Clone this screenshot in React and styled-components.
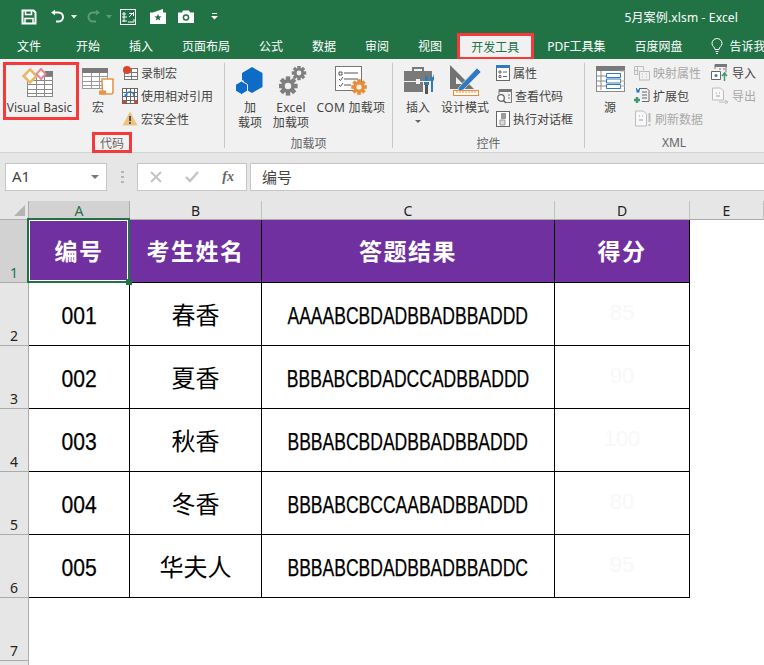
import { Fragment } from "react";
import styled, { createGlobalStyle } from "styled-components";

const GREEN = "#217346";
const RED = "#f43a3a";
const UI_FONT = `"Noto Sans", "Noto Sans CJK SC", sans-serif`;
const CELL_FONT = `"Liberation Sans", "Noto Sans CJK SC", sans-serif`;

const GlobalStyle = createGlobalStyle`
  html, body { margin: 0; padding: 0; background: #fff; }
  body { font-family: ${UI_FONT}; }
  * { box-sizing: border-box; }
`;

const Page = styled.div`
  width: 764px;
  height: 665px;
  overflow: hidden;
  display: flex;
  flex-direction: column;
`;

/* title bar */
const TitleBar = styled.div`
  height: 33px;
  flex: none;
  background: ${GREEN};
  display: flex;
  align-items: center;
  justify-content: space-between;
  padding: 0 26px 0 21px;
  color: #fff;
`;
const QuickAccess = styled.div`
  display: flex;
  align-items: center;
`;
const QuickItem = styled.span`
  display: flex;
  margin-left: ${(p) => p.$gap || 0}px;
`;
const DocName = styled.div`
  font-size: 12px;
  letter-spacing: 0.15px;
`;

/* tabs */
const TabBar = styled.div`
  height: 26px;
  flex: none;
  background: ${GREEN};
  display: flex;
  padding-left: 2.5px;
  overflow: hidden;
`;
const Tab = styled.div`
  height: 26px;
  flex: none;
  padding: 0 14.5px;
  margin-right: ${(p) => (p.$first ? "6px" : p.$active ? "-1px" : "0")};
  display: flex;
  align-items: center;
  gap: 6px;
  font-size: 12px;
  white-space: nowrap;
  color: ${(p) => (p.$active ? GREEN : "#fff")};
  background: ${(p) => (p.$active ? "#f1f1f1" : "transparent")};
  ${(p) => p.$active && `border: 3px solid ${RED}; border-bottom-width: 2px; padding: 0 11.5px;`}
`;

/* ribbon */
const Ribbon = styled.div`
  height: 94px;
  flex: none;
  background: #f1f1f1;
  border-bottom: 1px solid #d4d4d4;
  display: flex;
`;
const Group = styled.div`
  width: ${(p) => p.$width}px;
  flex: none;
  display: flex;
  flex-direction: column;
`;
const GroupBody = styled.div`
  height: 73px;
  flex: none;
  display: flex;
  padding-left: ${(p) => p.$left || 0}px;
  padding-top: 3px;
`;
const GroupFooter = styled.div`
  height: 21px;
  flex: none;
  display: flex;
  justify-content: center;
`;
const GroupLabel = styled.div`
  height: 21px;
  padding: 0 5px;
  display: flex;
  align-items: center;
  font-size: 12px;
  color: #666;
  ${(p) => p.$marked && `border: 3px solid ${RED}; padding: 0 5px;`}
`;
const Divider = styled.div`
  width: 1px;
  flex: none;
  margin: 4px 0;
  background: #c8c8c8;
`;
const LargeButton = styled.div`
  width: ${(p) => p.$width}px;
  flex: none;
  display: flex;
  flex-direction: column;
  align-items: center;
  font-size: 12px;
  line-height: 15px;
  color: #444;
  text-align: center;
  white-space: nowrap;
  letter-spacing: ${(p) => p.$spacing || 0}px;
  ${(p) => p.$marked && `border: 3px solid ${RED}; height: 58px; padding-right: 3px;`}
`;
const IconSlot = styled.div`
  height: ${(p) => p.$height || 38}px;
  flex: none;
  display: flex;
  align-items: center;
  justify-content: center;
`;
const Caret = styled.div`
  width: 0;
  height: 0;
  margin-top: 5px;
  border-left: 3px solid transparent;
  border-right: 3px solid transparent;
  border-top: 3px solid #666;
`;
const SmallList = styled.div`
  display: flex;
  flex-direction: column;
  flex: none;
  margin-left: ${(p) => p.$left || 0}px;
  margin-top: -1px;
`;
const SmallButton = styled.div`
  height: 23px;
  display: flex;
  align-items: center;
  gap: 3px;
  font-size: 12px;
  white-space: nowrap;
  color: ${(p) => (p.$off ? "#a8a8a8" : "#444")};
`;

/* formula bar */
const FormulaBar = styled.div`
  height: 48px;
  flex: none;
  background: #e6e6e6;
  display: flex;
  align-items: center;
  padding-left: 5px;
`;
const NameBox = styled.div`
  width: 102px;
  height: 28px;
  background: #fff;
  border: 1px solid #c6c6c6;
  display: flex;
  align-items: center;
  justify-content: space-between;
  padding: 0 7px 2px 6px;
  font-size: 15px;
  color: #444;
`;
const NameArrow = styled.div`
  width: 0;
  height: 0;
  margin-top: 2px;
  border-left: 4px solid transparent;
  border-right: 4px solid transparent;
  border-top: 4px solid #777;
`;
const Grip = styled.div`
  width: 3px;
  height: 12px;
  margin: 0 13px 0 14px;
  background: repeating-linear-gradient(to bottom, #b4b4b4 0 2px, transparent 2px 5px);
`;
const FormulaButtons = styled.div`
  width: 110px;
  height: 28px;
  background: #fff;
  border: 1px solid #c6c6c6;
  display: flex;
  align-items: center;
  justify-content: space-between;
  padding: 0 12px;
`;
const FxText = styled.span`
  font-family: "Liberation Serif", serif;
  font-style: italic;
  font-weight: 700;
  font-size: 14px;
  color: #666;
`;
const FormulaInput = styled.div`
  flex: 1;
  height: 28px;
  margin-left: 3px;
  background: #fff;
  border: 1px solid #c6c6c6;
  border-right: 0;
  display: flex;
  align-items: center;
  padding: 0 0 2px 11px;
  font-size: 15px;
  color: #444;
`;

/* sheet */
const Sheet = styled.div`
  flex: 1;
  display: grid;
  grid-template-columns: 29px 101px 132px 293px 135px 1fr;
  grid-template-rows: 19px repeat(8, 63px);
  background: #fff;
  overflow: hidden;
`;
const Corner = styled.div`
  background: #e6e6e6;
  border-right: 1px solid #ababab;
  border-bottom: 1px solid #ababab;
  display: flex;
  align-items: flex-end;
  justify-content: flex-end;
  padding: 0 3px 3px 0;
`;
const ColHead = styled.div`
  background: ${(p) => (p.$selected ? "#d2d2d2" : "#e6e6e6")};
  color: ${(p) => (p.$selected ? GREEN : "#222")};
  border-bottom: 1px solid #ababab;
  border-right: 1px solid ${(p) => (p.$selected ? "#ababab" : "#c0c0c0")};
  font-size: 14px;
  line-height: 18px;
  padding-top: 1px;
  text-align: center;
`;
const RowHead = styled.div`
  background: ${(p) => (p.$selected ? "#d2d2d2" : "#e6e6e6")};
  color: ${(p) => (p.$selected ? GREEN : "#222")};
  border-right: 1px solid #ababab;
  border-bottom: 1px solid #ababab;
  font-size: 14px;
  display: flex;
  align-items: flex-end;
  justify-content: center;
`;
const Cell = styled.div`
  border-right: 1px solid #000;
  border-bottom: 1px solid #000;
  display: flex;
  align-items: center;
  justify-content: center;
  padding-bottom: 2px;
  font-family: ${CELL_FONT};
  font-size: 24px;
  color: #000;
  white-space: nowrap;
`;
/* the sheet's latin font is much narrower than anything installed */
const Narrow = styled.span`
  display: inline-block;
  margin-top: 5px;
  -webkit-text-stroke: 0.25px #000;
  transform: scaleX(${(p) => p.$scale});
`;
const HeadCell = styled(Cell)`
  position: relative;
  background: #7030a0;
  color: #fff;
  font-weight: 700;
  font-family: "Noto Sans CJK SC", sans-serif;
  font-size: 23px;
  letter-spacing: 1.5px;
`;
const Selection = styled.div`
  position: absolute;
  z-index: 1;
  left: -2px;
  top: -2px;
  right: -1px;
  bottom: -1px;
  border: 2px solid ${GREEN};
  outline: 1px solid #fff;
  outline-offset: -3px;
`;
const FillHandle = styled.div`
  position: absolute;
  z-index: 2;
  right: -3px;
  bottom: -3px;
  width: 6px;
  height: 6px;
  background: ${GREEN};
`;
const Empty = styled.div``;
const Score = styled(Cell)`
  color: #f6f8f9;
  font-size: 22px;
`;

/* quick access icons */
const SaveIcon = () => (
  <svg width="16" height="16" viewBox="0 0 16 16" fill="none" stroke="#fff" strokeWidth="2">
    <path d="M1.5 1.5h11l2 2v11h-13z" />
    <path d="M4.5 1.5v4h6v-4" strokeWidth="1.5" />
    <path d="M4 14.5v-5h8v5" strokeWidth="1.5" />
  </svg>
);
const UndoIcon = ({ off }) => (
  <svg width="17" height="15" viewBox="0 0 17 15" fill="none" stroke={off ? "#5f9a7b" : "#fff"} strokeWidth="2">
    {off ? (
      <>
        <path d="M15 3.5L11 .8v5.5z" fill="#5f9a7b" stroke="none" />
        <path d="M12 3.5H8a4.5 4.5 0 0 0 0 9h3" />
      </>
    ) : (
      <>
        <path d="M1 3.5L5 .8v5.5z" fill="#fff" stroke="none" />
        <path d="M4 3.5h4.5a4.5 4.5 0 0 1 0 9H6" />
      </>
    )}
  </svg>
);
const TinyCaret = ({ off }) => (
  <svg width="6" height="4" viewBox="0 0 6 4">
    <path d="M0 0h6L3 3.5z" fill={off ? "#5f9a7b" : "#fff"} />
  </svg>
);
const FrameIcon = () => (
  <svg width="16" height="16" viewBox="0 0 16 16" fill="none" stroke="#fff">
    <rect x=".5" y=".5" width="15" height="15" />
    <path d="M4 3v10M2 8h5M2 12h5M2 5h4" />
    <path d="M14 3l-5 5M9 4.5h5M13.5 3v4M8 13h6v-3" />
  </svg>
);
const StarFolderIcon = () => (
  <svg width="16" height="15" viewBox="0 0 16 15">
    <path d="M0 3.5h3L13 0v3.5h3V15H0z" fill="#fff" />
    <path d="M8 5l1 2.3 2.5.2-1.9 1.6.6 2.4L8 10.3l-2.2 1.2.6-2.4-1.9-1.6L7 7.3z" fill={GREEN} />
  </svg>
);
const CameraIcon = () => (
  <svg width="16" height="13" viewBox="0 0 16 13">
    <path d="M0 2.5h4L5 .5h6l1 2h4V13H0z" fill="#fff" />
    <circle cx="8" cy="7.5" r="3.3" fill={GREEN} />
    <circle cx="8" cy="7.5" r="1.8" fill="#fff" />
  </svg>
);
const CustomizeIcon = () => (
  <svg width="7" height="7" viewBox="0 0 7 7">
    <path d="M1 .5h5" stroke="#fff" />
    <path d="M0 3h7L3.5 6.5z" fill="#fff" />
  </svg>
);
const BulbIcon = () => (
  <svg width="12" height="16" viewBox="0 0 12 16" fill="none" stroke="#fff">
    <path d="M4 11.5C4 9 1 8.5 1 5.5a5 5 0 0 1 10 0c0 3-3 3.5-3 6z" />
    <path d="M4.5 13.5h3M5 15.5h2" />
  </svg>
);

/* ribbon icons */
const SheetLines = ({ x, y, w, h, cols = 3, rows = 4, color = "#8a8a8a" }) => (
  <g stroke={color} fill="none">
    <rect x={x + 0.5} y={y + 0.5} width={w - 1} height={h - 1} fill="#fff" />
    {Array.from({ length: rows - 1 }, (_, i) => (
      <path key={i} d={`M${x} ${y + 0.5 + Math.round(((i + 1) * h) / rows)}h${w}`} />
    ))}
    {Array.from({ length: cols - 1 }, (_, i) => (
      <path key={i} d={`M${x + 0.5 + Math.round(((i + 1) * w) / cols)} ${y}v${h}`} />
    ))}
  </g>
);
const VisualBasicIcon = () => (
  <svg width="32" height="30" viewBox="0 0 32 30" style={{ marginLeft: -3 }}>
    <SheetLines x={5} y={8} w={26} h={21} cols={3} rows={5} />
    <path d="M23 3h8v5h-8z" fill="#7a7a7a" />
    <path d="M8 1.5l6.5 6.5L8 14.5 1.5 8z" fill="#fff" stroke="#e8b765" strokeWidth="2.5" />
    <path d="M19 1l4.5 5-4.5 5-4.5-5z" fill="#fff" stroke="#e58a9a" strokeWidth="2" />
  </svg>
);
const MacroIcon = () => (
  <svg width="32" height="30" viewBox="0 0 32 30">
    <SheetLines x={0} y={2} w={26} h={21} cols={3} rows={5} color="#9a9a9a" />
    <rect x="0" y="2" width="26" height="5" fill="#7a7a7a" />
    <path d="M20 13h11v13q0 2-2 2H18q3-1 2.5-3z" fill="#fff" stroke="#e8954a" strokeWidth="1.6" />
    <path d="M17 24.5h7v4h-7z" fill="#e8954a" />
  </svg>
);
const RecordIcon = () => (
  <svg width="16" height="16" viewBox="0 0 16 16">
    <SheetLines x={2} y={3} w={14} h={12} cols={2} rows={3} color="#777" />
    <circle cx="5" cy="5" r="4" fill="#d5492a" />
  </svg>
);
const RelativeIcon = () => (
  <svg width="16" height="16" viewBox="0 0 16 16">
    <SheetLines x={0} y={0} w={16} h={16} cols={4} rows={4} color="#666" />
    <path d="M1 12h3v3H1zM12 12h3v3h-3z" fill="#d5492a" />
    <path d="M4 8a4 4 0 0 1 8 0" stroke="#2f7ac0" strokeWidth="1.6" fill="none" />
    <path d="M2 6.5h4L4 10z" fill="#2f7ac0" />
  </svg>
);
const WarningIcon = () => (
  <svg width="16" height="15" viewBox="0 0 16 15">
    <path d="M8 .5L15.5 14.5H.5z" fill="#eec27d" />
    <path d="M7 5h2v5H7zM7 11h2v2H7z" fill="#555" />
  </svg>
);
const HexIcon = () => (
  <svg width="28" height="28" viewBox="0 0 28 28" style={{ marginLeft: -2 }}>
    <path d="M17 0l10.5 6v14L17 26 9 21.5V14l-2-1V6z" fill="#0f6cc6" />
    <path d="M6.5 14l6 3.5v6.500l-6 3.5L.5 24v-6.500z" fill="#0f6cc6" stroke="#f1f1f1" />
  </svg>
);
const Gear = ({ cx, cy, r, color }) => {
  const teeth = Array.from({ length: 4 }, (_, i) => (i * 360) / 8);
  return (
    <g>
      {teeth.map((a) => (
        <rect
          key={a}
          x={cx - r * 0.28}
          y={cy - r * 1.2}
          width={r * 0.56}
          height={r * 2.4}
          fill={color}
          transform={`rotate(${a} ${cx} ${cy})`}
        />
      ))}
      <circle cx={cx} cy={cy} r={r * 0.85} fill={color} />
      <circle cx={cx} cy={cy} r={r * 0.4} fill="#f1f1f1" />
    </g>
  );
};
const GearsIcon = () => (
  <svg width="28" height="30" viewBox="0 0 28 30" style={{ marginLeft: 3 }}>
    <Gear cx={20} cy={7} r={6} color="#7f7f7f" />
    <Gear cx={9} cy={20} r={8} color="#7f7f7f" />
  </svg>
);
const ComIcon = () => (
  <svg width="32" height="30" viewBox="0 0 32 30" fill="none">
    <rect x=".5" y=".5" width="26" height="24" fill="#fff" stroke="#777" />
    <path d="M4 6h3v3H4z" stroke="#555" />
    <path d="M9 7h14M9 13h14M9 19h7" stroke="#555" />
    <path d="M4 13l1.5 1.5L8 11M4 19l1.5 1.5L8 17" stroke="#555" />
    <Gear cx={24} cy={21} r={6.5} color="#ea8b35" />
  </svg>
);
const ToolboxIcon = () => (
  <svg width="30" height="28" viewBox="0 0 30 28" style={{ marginLeft: 2 }}>
    <path d="M9 4V1h10v3" fill="none" stroke="#7a7a7a" strokeWidth="2" />
    <path d="M0 4h28v10H0zM0 15h19v10H0z" fill="#7a7a7a" />
    <path d="M12 12h4v5h-4z" fill="#f1f1f1" />
    <path d="M21 9h3v5h-3zM20 15h5v3h-5z" fill="#2f7ac0" />
    <path d="M21 18h3v9h-3z" fill="#555" />
    <path d="M26 7v5a2 2 0 0 0 1 2v11h2V14a2 2 0 0 0 1-2V7l-1 3h-2z" fill="#2f7ac0" />
  </svg>
);
const DesignIcon = () => (
  <svg width="32" height="32" viewBox="0 0 32 32" style={{ marginLeft: 1 }}>
    <path d="M0 0l24 24H0zM6 12v7h7z" fill="#737373" fillRule="evenodd" />
    <path d="M9 22L27 3l4 4L13 25l-5 1z" fill="#2f7ac0" stroke="#f1f1f1" strokeWidth=".6" />
    <rect x="3.5" y="25.5" width="25" height="5" fill="#fff" stroke="#ea8b35" />
    <path d="M7 26v2M10 26v2M13 26v2M16 26v2M19 26v2M22 26v2M25 26v2" stroke="#ea8b35" />
  </svg>
);
const PropsIcon = () => (
  <svg width="14" height="16" viewBox="0 0 14 16" fill="none">
    <rect x=".5" y=".5" width="13" height="15" fill="#fff" stroke="#666" />
    <rect x="0" y="0" width="14" height="3" fill="#2f7ac0" />
    <path d="M3 6h2v2H3zM3 10.5h2v2H3zM7 7h4M7 11.5h4" stroke="#666" />
  </svg>
);
const ViewCodeIcon = () => (
  <svg width="16" height="16" viewBox="0 0 16 16" fill="none">
    <path d="M3 6V1.5h12.5v13H9" stroke="#777" />
    <path d="M3 1h13v3H3z" fill="#777" />
    <path d="M12 7h2M12 10h2" stroke="#777" />
    <circle cx="5" cy="10" r="3.3" fill="#fff" stroke="#666" strokeWidth="1.3" />
    <path d="M7.5 12.5L10 15" stroke="#666" strokeWidth="1.6" />
  </svg>
);
const DialogIcon = () => (
  <svg width="14" height="16" viewBox="0 0 14 16">
    <rect x=".5" y=".5" width="13" height="15" fill="#fff" stroke="#666" />
    <path d="M5 2h5v6H5z" fill="#999" />
    <path d="M4 9h5v5H4z" fill="#ddd" stroke="#999" />
  </svg>
);
const SourceIcon = () => (
  <svg width="30" height="30" viewBox="0 0 30 30" fill="none" style={{ marginLeft: 2 }}>
    <rect x=".5" y=".5" width="28" height="25" fill="#fff" stroke="#8a8a8a" />
    <rect x="0" y="0" width="29" height="5" fill="#7a7a7a" />
    <path d="M5 5v19M0 10h5M0 15h5M0 20h5M5 10h5M5 15h5M5 20h5" stroke="#8a8a8a" />
    <path d="M10.5 7.5h14v4h-14zM10.5 13h14v4h-14zM10.5 18.5h14v4h-14z" stroke="#2f7ac0" />
    <path d="M24 5h5M24 15h5M24 20h5" stroke="#aaa" />
  </svg>
);
const MapPropsIcon = () => (
  <svg width="16" height="16" viewBox="0 0 16 16" fill="none" stroke="#bcbcbc">
    <path d="M.5 1.5h9v4M.5 1.5v8h4M3.5 1.5v8M.5 5.5h4" />
    <rect x="5.5" y="6.5" width="10" height="8.5" fill="#f1f1f1" />
    <path d="M8 9h1M12 9h1M8 12h1M12 12h1" />
  </svg>
);
const PackIcon = () => (
  <svg width="16" height="17" viewBox="0 0 16 17" fill="none">
    <path d="M6 1.5h7l2 2v11H8" stroke="#666" />
    <path d="M8 5h5M8 8h5M8 11h5" stroke="#666" />
    <path d="M2 2h1M5 2h1" stroke="#2f7ac0" strokeWidth="2" />
    <circle cx="4" cy="4" r="1.8" fill="#2f7ac0" />
    <path d="M0 13h6M3 10v6" stroke="#3d9970" strokeWidth="2.4" />
  </svg>
);
const ImportIcon = () => (
  <svg width="18" height="18" viewBox="0 0 18 18" fill="none">
    <path d="M4 5V.5h11v8" stroke="#777" />
    <path d="M4 0h12v3H4z" fill="#777" />
    <path d="M8 5h2M12 5h2" stroke="#777" />
    <path d="M.5 7.5h9v8h-9z" fill="#fff" stroke="#666" />
    <circle cx="5" cy="11.5" r="1.5" fill="#2f7ac0" />
    <path d="M13.5 17v-7M11 12l2.5-3 2.5 3" stroke="#3d9970" strokeWidth="1.5" />
  </svg>
);
const ExportIcon = () => (
  <svg width="18" height="18" viewBox="0 0 18 18" fill="none" stroke="#bcbcbc">
    <path d="M1.5 1h8l3 3v9h-11z" fill="#f8f8f8" />
    <path d="M5 6h1M8 6h1M5 9h4" strokeWidth="1.5" />
    <path d="M8 15h8M14 13l3 2-3 2" />
  </svg>
);
const RefreshIcon = () => (
  <svg width="18" height="17" viewBox="0 0 18 17" fill="none" stroke="#bcbcbc">
    <path d="M1.5 1h8l3 3v12h-11z" fill="#f8f8f8" />
    <path d="M5 6h1M8 6h1M5 10h4" strokeWidth="1.5" />
    <path d="M15.5 3v9M15.5 14v2" strokeWidth="2" />
  </svg>
);
const CrossIcon = () => (
  <svg width="12" height="12" viewBox="0 0 12 12">
    <path d="M1 1l10 10M11 1L1 11" stroke="#c4c4c4" strokeWidth="2" />
  </svg>
);
const CheckIcon = () => (
  <svg width="14" height="12" viewBox="0 0 14 12" fill="none">
    <path d="M1 6l4 4 8-9" stroke="#c4c4c4" strokeWidth="2.4" />
  </svg>
);
const CornerMark = () => (
  <svg width="11" height="11" viewBox="0 0 11 11">
    <path d="M11 0v11H0z" fill="#b4b4b4" />
  </svg>
);

const tabs = ["开始", "插入", "页面布局", "公式", "数据", "审阅", "视图"];

const rows = [
  ["001", "春香", "AAAABCBDADBBADBBADDD", "85"],
  ["002", "夏香", "BBBABCBDADCCADBBADDD", "90"],
  ["003", "秋香", "BBBABCBDADBBADBBADDD", "100"],
  ["004", "冬香", "BBBABCBCCAABADBBADDD", "80"],
  ["005", "华夫人", "BBBABCBDADBBADBBADDC", "95"],
];

export default function App() {
  return (
    <Page>
      <GlobalStyle />
      <TitleBar>
        <QuickAccess>
          <QuickItem><SaveIcon /></QuickItem>
          <QuickItem $gap={13}><UndoIcon /></QuickItem>
          <QuickItem $gap={4}><TinyCaret /></QuickItem>
          <QuickItem $gap={8}><UndoIcon off /></QuickItem>
          <QuickItem $gap={4}><TinyCaret off /></QuickItem>
          <QuickItem $gap={8}><FrameIcon /></QuickItem>
          <QuickItem $gap={14}><StarFolderIcon /></QuickItem>
          <QuickItem $gap={12}><CameraIcon /></QuickItem>
          <QuickItem $gap={17}><CustomizeIcon /></QuickItem>
        </QuickAccess>
        <DocName>5月案例.xlsm - Excel</DocName>
      </TitleBar>

      <TabBar>
        <Tab $first>文件</Tab>
        {tabs.map((t) => (
          <Tab key={t}>{t}</Tab>
        ))}
        <Tab $active>开发工具</Tab>
        <Tab>PDF工具集</Tab>
        <Tab>百度网盘</Tab>
        <Tab>
          <BulbIcon />
          告诉我
        </Tab>
      </TabBar>

      <Ribbon>
        <Group $width={224}>
          <GroupBody $left={3}>
            <LargeButton $width={76} $marked>
              <IconSlot $height={35}>
                <VisualBasicIcon />
              </IconSlot>
              Visual Basic
            </LargeButton>
            <LargeButton $width={38}>
              <IconSlot>
                <MacroIcon />
              </IconSlot>
              宏
            </LargeButton>
            <SmallList $left={5}>
              <SmallButton>
                <RecordIcon />
                录制宏
              </SmallButton>
              <SmallButton>
                <RelativeIcon />
                使用相对引用
              </SmallButton>
              <SmallButton>
                <WarningIcon />
                宏安全性
              </SmallButton>
            </SmallList>
          </GroupBody>
          <GroupFooter>
            <GroupLabel $marked>代码</GroupLabel>
          </GroupFooter>
        </Group>
        <Divider />
        <Group $width={167}>
          <GroupBody $left={8}>
            <LargeButton $width={34}>
              <IconSlot>
                <HexIcon />
              </IconSlot>
              加<br />载项
            </LargeButton>
            <LargeButton $width={48} $spacing={0.2}>
              <IconSlot>
                <GearsIcon />
              </IconSlot>
              Excel
              <br />
              加载项
            </LargeButton>
            <LargeButton $width={72} $spacing={0.3}>
              <IconSlot>
                <ComIcon />
              </IconSlot>
              COM 加载项
            </LargeButton>
          </GroupBody>
          <GroupFooter>
            <GroupLabel>加载项</GroupLabel>
          </GroupFooter>
        </Group>
        <Divider />
        <Group $width={191}>
          <GroupBody $left={5}>
            <LargeButton $width={40}>
              <IconSlot>
                <ToolboxIcon />
              </IconSlot>
              插入
              <Caret />
            </LargeButton>
            <LargeButton $width={54}>
              <IconSlot>
                <DesignIcon />
              </IconSlot>
              设计模式
            </LargeButton>
            <SmallList $left={4}>
              <SmallButton>
                <PropsIcon />
                属性
              </SmallButton>
              <SmallButton>
                <ViewCodeIcon />
                查看代码
              </SmallButton>
              <SmallButton>
                <DialogIcon />
                执行对话框
              </SmallButton>
            </SmallList>
          </GroupBody>
          <GroupFooter>
            <GroupLabel>控件</GroupLabel>
          </GroupFooter>
        </Group>
        <Divider />
        <Group $width={178}>
          <GroupBody $left={8}>
            <LargeButton $width={34}>
              <IconSlot>
                <SourceIcon />
              </IconSlot>
              源
            </LargeButton>
            <SmallList $left={7}>
              <SmallButton $off>
                <MapPropsIcon />
                映射属性
              </SmallButton>
              <SmallButton>
                <PackIcon />
                扩展包
              </SmallButton>
              <SmallButton $off>
                <RefreshIcon />
                刷新数据
              </SmallButton>
            </SmallList>
            <SmallList $left={8}>
              <SmallButton>
                <ImportIcon />
                导入
              </SmallButton>
              <SmallButton $off>
                <ExportIcon />
                导出
              </SmallButton>
            </SmallList>
          </GroupBody>
          <GroupFooter>
            <GroupLabel>XML</GroupLabel>
          </GroupFooter>
        </Group>
      </Ribbon>

      <FormulaBar>
        <NameBox>
          A1
          <NameArrow />
        </NameBox>
        <Grip />
        <FormulaButtons>
          <CrossIcon />
          <CheckIcon />
          <FxText>fx</FxText>
        </FormulaButtons>
        <FormulaInput>编号</FormulaInput>
      </FormulaBar>

      <Sheet>
        <Corner>
          <CornerMark />
        </Corner>
        <ColHead $selected>A</ColHead>
        <ColHead>B</ColHead>
        <ColHead>C</ColHead>
        <ColHead>D</ColHead>
        <ColHead>E</ColHead>

        <RowHead $selected>1</RowHead>
        <HeadCell>
          编号
          <Selection />
          <FillHandle />
        </HeadCell>
        <HeadCell>考生姓名</HeadCell>
        <HeadCell>答题结果</HeadCell>
        <HeadCell>得分</HeadCell>
        <Empty />

        {rows.map((r, i) => (
          <Fragment key={r[0]}>
            <RowHead>{i + 2}</RowHead>
            <Cell>
              <Narrow $scale={0.88}>{r[0]}</Narrow>
            </Cell>
            <Cell>{r[1]}</Cell>
            <Cell>
              <Narrow $scale={0.73}>{r[2]}</Narrow>
            </Cell>
            <Score>{r[3]}</Score>
            <Empty />
          </Fragment>
        ))}

        <RowHead>7</RowHead>
        <Empty />
        <Empty />
        <Empty />
        <Empty />
        <Empty />
        <RowHead />
      </Sheet>
    </Page>
  );
}
